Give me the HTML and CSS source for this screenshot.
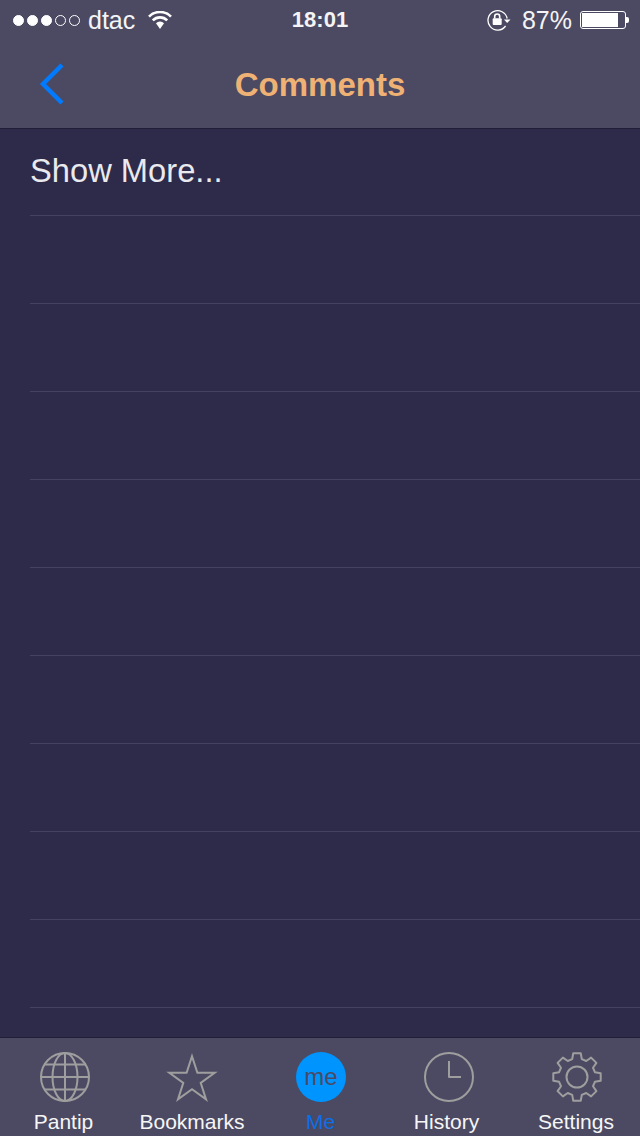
FILE: index.html
```html
<!DOCTYPE html>
<html lang="en">
<head>
    <meta charset="UTF-8">
    <meta name="viewport" content="width=device-width, initial-scale=1.0">
    <title>Comments</title>
    <link rel="stylesheet" href="styles.css">
</head>
<body>
    <div class="phone">
        <div class="top-bar">
            <div class="status-bar">
                <div class="status-left">
                    <div class="signal">
                        <span class="dot on"></span><span class="dot on"></span><span class="dot on"></span><span class="dot"></span><span class="dot"></span>
                    </div>
                    <span class="carrier">dtac</span>
                    <svg class="wifi" width="24" height="18" viewBox="0 0 24 18">
                        <path d="M1 5.6 A15.5 15.5 0 0 1 23 5.6" fill="none" stroke="#fff" stroke-width="2.6"/>
                        <path d="M4.8 9.4 A10 10 0 0 1 19.2 9.4" fill="none" stroke="#fff" stroke-width="2.6"/>
                        <path d="M8 12.2 A5.5 5.5 0 0 1 16 12.2 L12 18 Z" fill="#fff"/>
                    </svg>
                </div>
                <div class="clock">18:01</div>
                <div class="status-right">
                    <svg class="rotation-lock" width="24" height="22" viewBox="0 0 24 22">
                        <path d="M18.6 17 A9.7 9.7 0 1 1 20.2 9.5" fill="none" stroke="#fff" stroke-width="1.3"/>
                        <path d="M17 10.5 H23.5 L20.2 14 Z" fill="#fff"/>
                        <path d="M7.7 9.5 V7.5 A2.5 2.5 0 0 1 12.7 7.5 V9.5" fill="none" stroke="#fff" stroke-width="1.6"/>
                        <rect x="5.7" y="9.3" width="9" height="6.7" rx="1" fill="#fff"/>
                    </svg>
                    <span class="battery-text">87%</span>
                    <div class="battery">
                        <div class="battery-body"><div class="battery-fill"></div></div>
                        <div class="battery-tip"></div>
                    </div>
                </div>
            </div>
            <div class="nav-bar">
                <svg class="back" width="26" height="42" viewBox="0 0 26 42">
                    <path d="M24 2 L5 21 L24 40" fill="none" stroke="#007aff" stroke-width="4.4"/>
                </svg>
                <h1 class="title">Comments</h1>
            </div>
        </div>

        <div class="list">
            <div class="row show-more">Show More...</div>
            <div class="row"></div>
            <div class="row"></div>
            <div class="row"></div>
            <div class="row"></div>
            <div class="row"></div>
            <div class="row"></div>
            <div class="row"></div>
            <div class="row"></div>
            <div class="row"></div>
        </div>

        <div class="tab-bar">
            <div class="tab tab-pantip">
                <svg class="tab-icon" width="50" height="50" viewBox="0 0 50 50">
                    <circle cx="25" cy="25" r="24"/>
                    <ellipse cx="25" cy="25" rx="12.5" ry="24"/>
                    <path d="M25 1 V49 M1 25 H49 M4.5 12.5 H45.5 M4.5 37.5 H45.5"/>
                </svg>
                <span>Pantip</span>
            </div>
            <div class="tab tab-bookmarks">
                <svg class="tab-icon" width="50" height="50" viewBox="0 0 50 50">
                    <path d="M25 4.2 L30.4 20.7 L47.7 20.7 L33.7 30.9 L39.05 47.4 L25 37.2 L10.95 47.4 L16.3 30.9 L2.3 20.7 L19.6 20.7 Z"/>
                </svg>
                <span>Bookmarks</span>
            </div>
            <div class="tab tab-me active">
                <div class="me-badge">me</div>
                <span>Me</span>
            </div>
            <div class="tab tab-history">
                <svg class="tab-icon" width="50" height="50" viewBox="0 0 50 50">
                    <circle cx="25" cy="25" r="24"/>
                    <path d="M25 9 V25 H37"/>
                </svg>
                <span>History</span>
            </div>
            <div class="tab tab-settings">
                <svg class="tab-icon" width="50" height="50" viewBox="-25 -25 50 50">
                    <circle cx="0" cy="0" r="10.5"/>
                    <path d="M-3.75 -23.7 L3.75 -23.7 L4.8 -17.9 L9.25 -16 L14.1 -19.4 L19.4 -14.1 L16 -9.25 L17.9 -4.8 L23.7 -3.75 L23.7 3.75 L17.9 4.8 L16 9.25 L19.4 14.1 L14.1 19.4 L9.25 16 L4.8 17.9 L3.75 23.7 L-3.75 23.7 L-4.8 17.9 L-9.25 16 L-14.1 19.4 L-19.4 14.1 L-16 9.25 L-17.9 4.8 L-23.7 3.75 L-23.7 -3.75 L-17.9 -4.8 L-16 -9.25 L-19.4 -14.1 L-14.1 -19.4 L-9.25 -16 L-4.8 -17.9 Z"/>
                </svg>
                <span>Settings</span>
            </div>
        </div>
    </div>
</body>
</html>
```

FILE: styles.css
```css
body {
    margin: 0;
    font-family: "Liberation Sans", Arial, sans-serif;
    background-color: #2d2a4a;
}
.phone {
    width: 640px;
    height: 1136px;
    display: flex;
    flex-direction: column;
    overflow: hidden;
}
.top-bar {
    height: 128px;
    flex-shrink: 0;
    background-color: #4c4a62;
    border-bottom: 1px solid #211f38;
}
.status-bar {
    height: 40px;
    display: flex;
    align-items: center;
    justify-content: space-between;
    position: relative;
    color: #f4f4f6;
    font-size: 25px;
}
.status-left {
    display: flex;
    align-items: center;
    padding-left: 13px;
}
.signal {
    display: flex;
    gap: 3px;
    margin-right: 8px;
}
.dot {
    width: 9px;
    height: 9px;
    border: 1px solid #fff;
    border-radius: 50%;
}
.dot.on {
    background-color: #fff;
}
.wifi {
    margin-left: 13px;
}
.clock {
    position: absolute;
    left: 0;
    right: 0;
    text-align: center;
    font-weight: bold;
    font-size: 22px;
}
.status-right {
    display: flex;
    align-items: center;
    padding-right: 11px;
}
.rotation-lock {
    margin-right: 11px;
}
.battery-text {
    margin-right: 8px;
}
.battery {
    display: flex;
    align-items: center;
}
.battery-body {
    width: 46px;
    height: 18px;
    box-sizing: border-box;
    padding: 1px;
    border: 1px solid #fff;
    border-radius: 3px;
}
.battery-fill {
    width: 36px;
    height: 100%;
    background-color: #fff;
}
.battery-tip {
    width: 3px;
    height: 6px;
    background-color: #fff;
    border-radius: 0 2px 2px 0;
}
.nav-bar {
    height: 88px;
    position: relative;
    display: flex;
    align-items: center;
    justify-content: center;
}
.back {
    position: absolute;
    left: 38px;
    top: 23px;
}
.title {
    margin: 1px 0 0;
    font-size: 33px;
    font-weight: bold;
    color: #efb274;
}
.list {
    flex: 1;
    padding-left: 30px;
    overflow: hidden;
}
.row {
    height: 87px;
    border-bottom: 1px solid #45425f;
}
.show-more {
    height: 86px;
    line-height: 83px;
    font-size: 32.7px;
    color: #e9e9ee;
}
.tab-bar {
    height: 98px;
    flex-shrink: 0;
    display: flex;
    background-color: #4c4a62;
    border-top: 1px solid #211f38;
}
.tab {
    flex: 1;
    display: flex;
    flex-direction: column;
    align-items: center;
    padding-top: 14px;
    color: #f6f6f6;
    font-size: 21px;
}
.tab span {
    margin-top: 8px;
    white-space: nowrap;
}
.tab-icon {
    margin-left: 2px;
    fill: none;
    stroke: #9e9e9e;
    stroke-width: 2;
    stroke-linejoin: round;
    overflow: visible;
}
.tab-bookmarks .tab-icon {
    margin-left: 0;
    stroke-linejoin: miter;
}
.tab-pantip span {
    margin-left: -1px;
}
.tab-history span {
    margin-left: -3px;
}
.active {
    color: #0a6fe8;
}
.tab-me span {
    margin-left: 1px;
}
.me-badge {
    width: 50px;
    height: 50px;
    margin-left: 2px;
    border-radius: 50%;
    background-color: #0094ff;
    color: #4c4a62;
    font-size: 24px;
    line-height: 50px;
    text-align: center;
}
```
